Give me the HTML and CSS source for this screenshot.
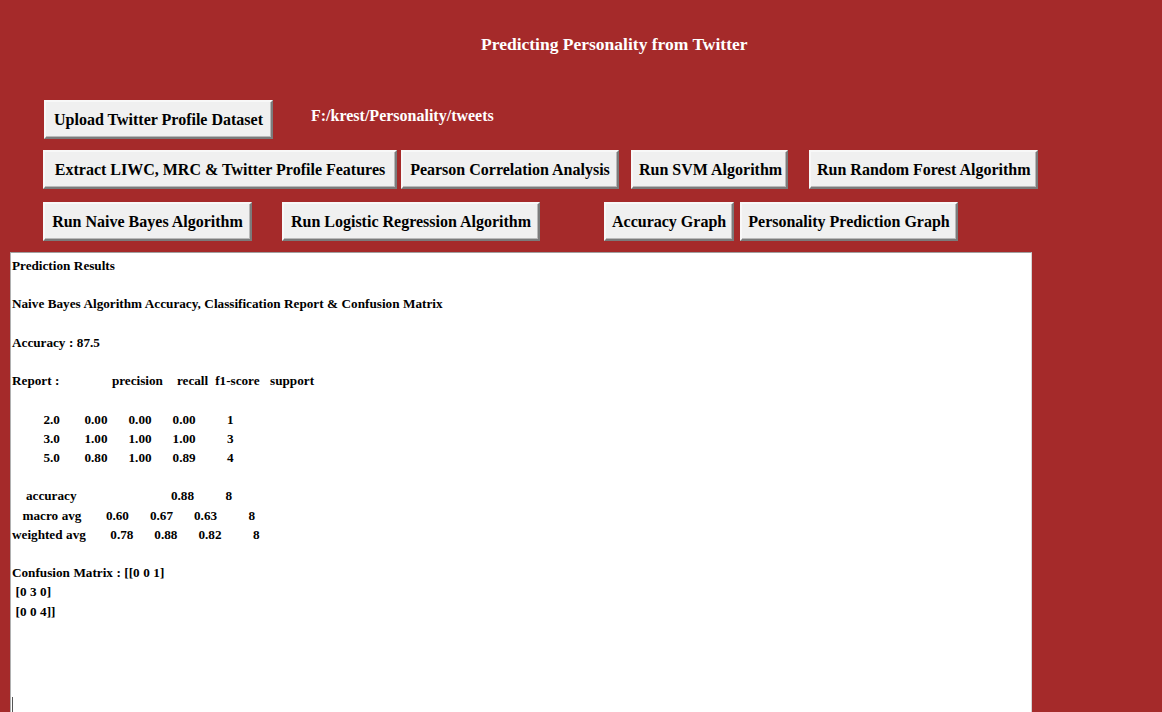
FILE: index.html
```html
<!DOCTYPE html>
<html>
<head>
<meta charset="utf-8">
<link rel="stylesheet" href="styles.css">
</head>
<body>
<div class="app">
  <div class="title">Predicting Personality from Twitter</div>
  <div class="row row1">
    <button class="btn b-upload">Upload Twitter Profile Dataset</button>
    <span class="path">F:/krest/Personality/tweets</span>
  </div>
  <div class="row row2">
    <button class="btn b-extract">Extract LIWC, MRC &amp; Twitter Profile Features</button>
    <button class="btn b-pearson">Pearson Correlation Analysis</button>
    <button class="btn b-svm">Run SVM Algorithm</button>
    <button class="btn b-rf">Run Random Forest Algorithm</button>
  </div>
  <div class="row row3">
    <button class="btn b-nb">Run Naive Bayes Algorithm</button>
    <button class="btn b-lr">Run Logistic Regression Algorithm</button>
    <button class="btn b-acc">Accuracy Graph</button>
    <button class="btn b-pp">Personality Prediction Graph</button>
  </div>
  <div class="output">
<pre class="text">Prediction Results

Naive Bayes Algorithm Accuracy, Classification Report &amp; Confusion Matrix

Accuracy : 87.5

Report :               precision    recall  f1-score   support

         2.0       0.00      0.00      0.00         1
         3.0       1.00      1.00      1.00         3
         5.0       0.80      1.00      0.89         4

    accuracy                           0.88         8
   macro avg       0.60      0.67      0.63         8
weighted avg       0.78      0.88      0.82         8

Confusion Matrix : [[0 0 1]
 [0 3 0]
 [0 0 4]]</pre>
    <span class="cursor"></span>
  </div>
</div>
</body>
</html>
```

FILE: styles.css
```css
html, body {
  margin: 0;
  padding: 0;
  height: 100%;
  overflow: hidden;
  background: #a52a2a;
}

.app {
  width: 1162px;
  height: 712px;
  display: flex;
  flex-direction: column;
  font-family: "Liberation Serif", "Times New Roman", serif;
  font-weight: bold;
}

.title {
  color: #ffffff;
  font-size: 17.5px;
  line-height: 20px;
  padding: 34px 0 0 481px;
  height: 20px;
}

.row {
  display: flex;
  align-items: center;
  padding-left: 43px;
}

.row1 {
  margin-top: 46px;
}

.row2 {
  margin-top: 11px;
}

.row3 {
  margin-top: 13px;
}

.btn {
  font-family: "Liberation Serif", "Times New Roman", serif;
  font-weight: bold;
  font-size: 16px;
  color: #000;
  background: #f0f0f0;
  height: 39px;
  padding: 0 6px;
  margin: 0;
  border-width: 2px;
  border-style: solid;
  border-color: #f8f8f8 #7b7b7b #7b7b7b #f8f8f8;
  box-shadow: inset -1px -1px 0 #b9b9b9;
  cursor: default;
  white-space: nowrap;
}

.b-upload { width: 229px; margin-left: 1px; }
.path {
  color: #ffffff;
  font-size: 16px;
  margin-left: 38px;
  margin-top: -8px;
}

.b-extract { width: 354px; }
.b-pearson { width: 218px; margin-left: 4px; }
.b-svm { width: 157px; margin-left: 12px; }
.b-rf { width: 229px; margin-left: 21px; }

.b-nb { width: 209px; }
.b-lr { width: 258px; margin-left: 30px; }
.b-acc { width: 130px; margin-left: 64px; }
.b-pp { width: 218px; margin-left: 6px; }

.output {
  position: relative;
  margin-top: 11px;
  margin-left: 10px;
  width: 1020px;
  flex: 1;
  background: #ffffff;
  border-top: 1px solid #a0a0a0;
  border-right: 1px solid #d4d4d4;
  border-left: 1px solid #b0b0b0;
}

.text {
  margin: 0;
  padding: 3px 0 0 1px;
  font-family: "Liberation Serif", "Times New Roman", serif;
  font-weight: bold;
  font-size: 13.2px;
  line-height: 19.2px;
  word-spacing: 0.2px;
  color: #000;
  white-space: pre;
}

.cursor {
  position: absolute;
  left: 1px;
  bottom: 0;
  width: 1px;
  height: 15px;
  background: #555;
}
```
